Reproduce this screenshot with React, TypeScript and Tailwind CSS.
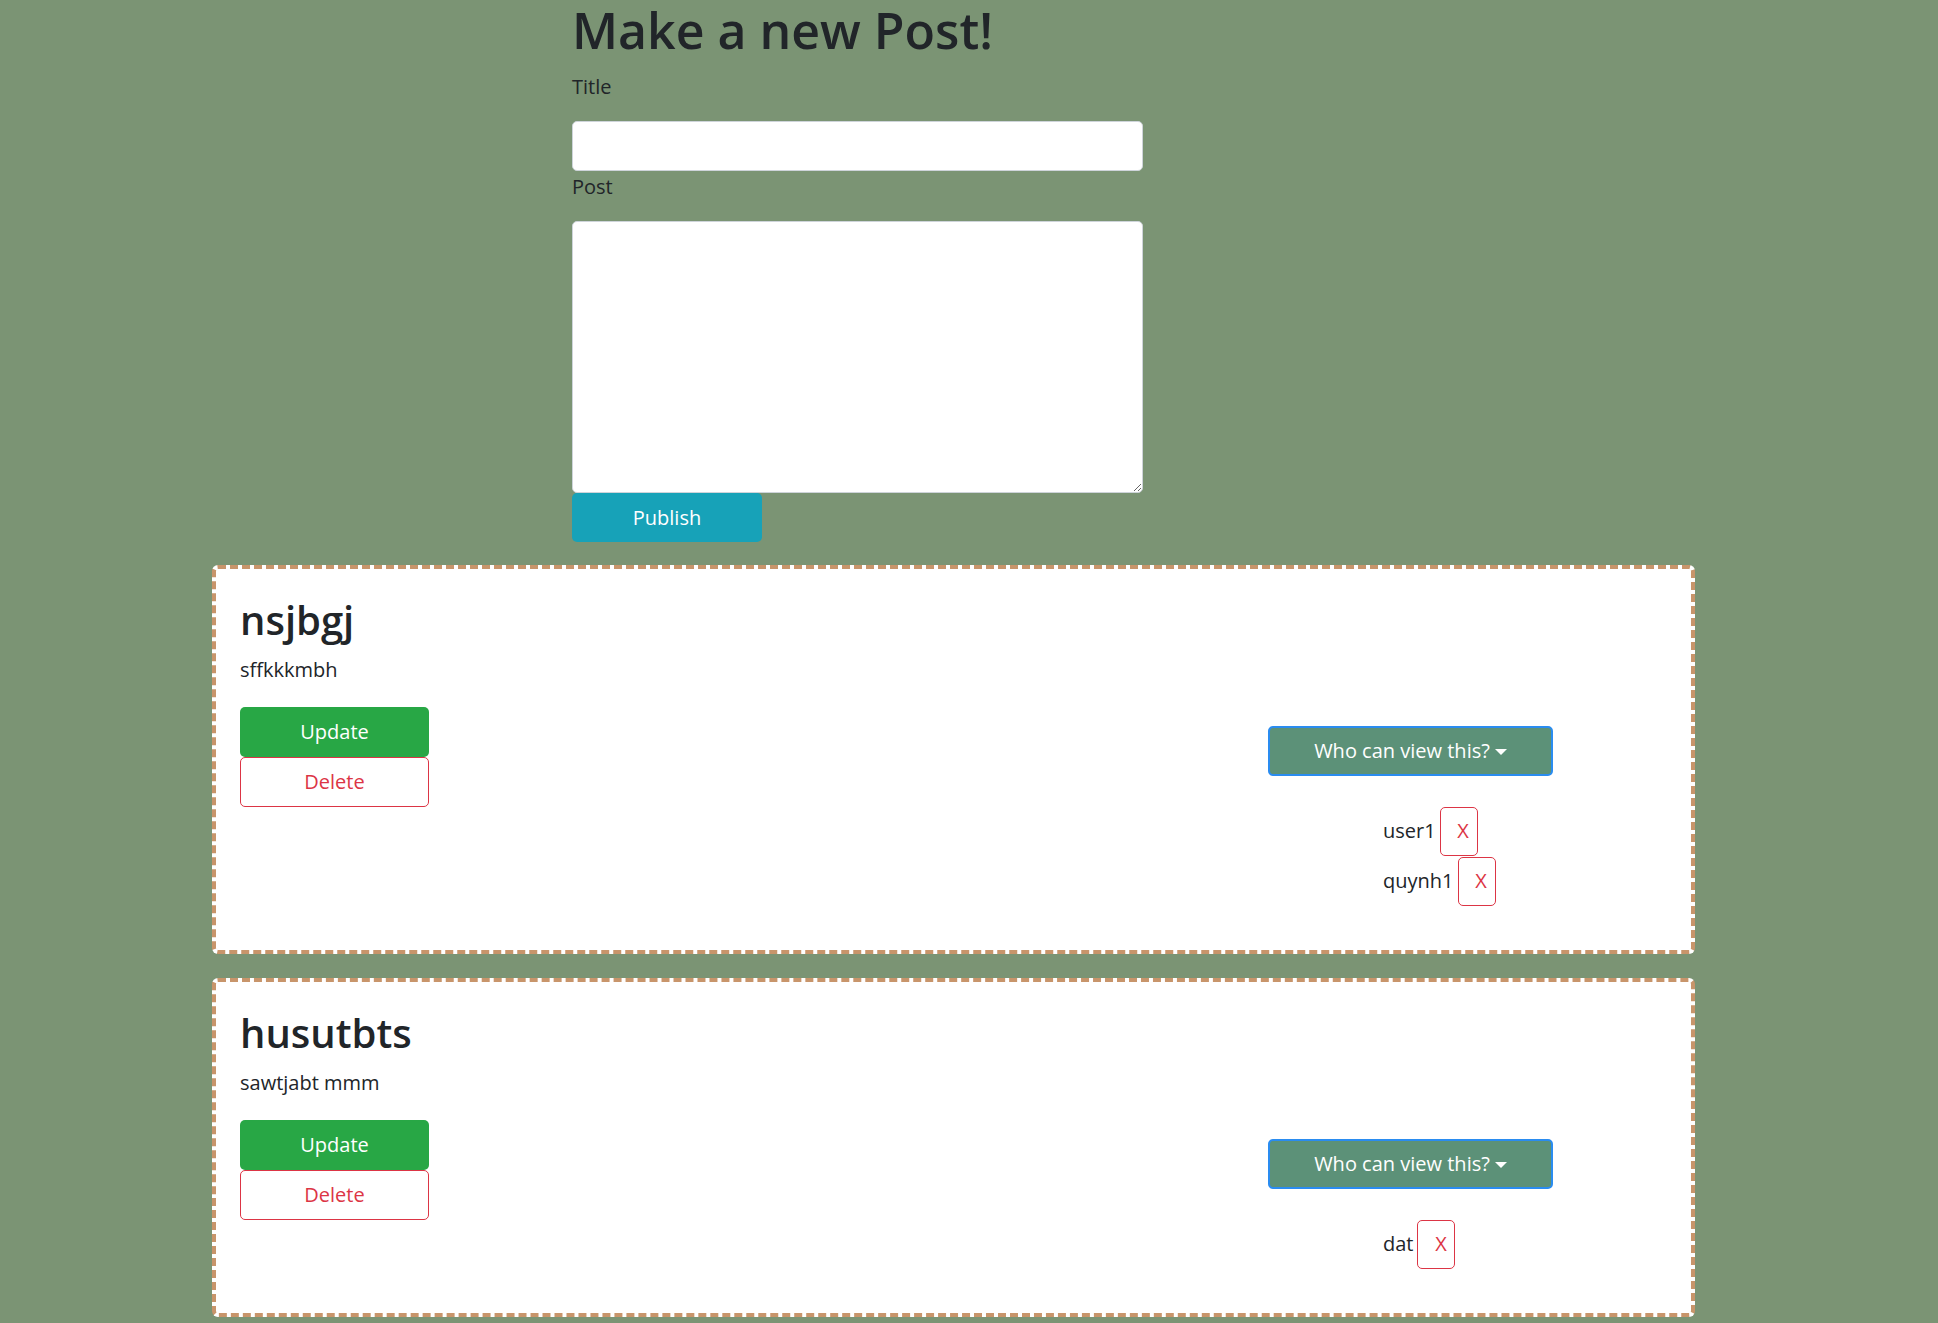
import React from 'react'

type Post = {
  title: string
  body: string
  viewers: string[]
}

const posts: Post[] = [
  { title: 'nsjbgj', body: 'sffkkkmbh', viewers: ['user1', 'quynh1'] },
  { title: 'husutbts', body: 'sawtjabt mmm', viewers: ['dat'] },
]

function ViewerRow({ name }: { name: string }) {
  return (
    <div className="flex h-[50px] items-center">
      <span className="text-[20px] text-[#212529]">{name}</span>
      <button className="ml-[4px] flex h-[49px] w-[38px] items-center justify-center rounded-[5px] border border-[#dc3545] pl-[9px] text-[20px] text-[#dc3545]">
        X
      </button>
    </div>
  )
}

function PostCard({ post }: { post: Post }) {
  return (
    <div className="flex items-start rounded-[6px] border-[4px] border-dashed border-[#c8956b] bg-white pb-[44px] pl-[24px] pt-[27px]">
      <div className="flex w-[189px] shrink-0 flex-col">
        <h2 className="whitespace-nowrap text-[40px] font-semibold leading-[48px] text-[#212529]">{post.title}</h2>
        <p className="mt-[11px] whitespace-nowrap text-[20px] leading-[30px] text-[#212529]">{post.body}</p>
        <button className="mt-[22px] h-[50px] w-[189px] rounded-[5px] bg-[#28a745] text-[20px] text-white">
          Update
        </button>
        <button className="h-[50px] w-[189px] rounded-[5px] border border-[#dc3545] bg-white text-[20px] text-[#dc3545]">
          Delete
        </button>
      </div>
      <div className="ml-[839px] mt-[130px] flex w-[285px] flex-col">
        <button className="flex h-[50px] w-[285px] items-center justify-center rounded-[5px] border-2 border-[#2a8cf0] bg-[#5c9178] text-[20px] text-white">
          Who can view this?
          <span className="ml-[5px] mt-[1px] h-0 w-0 border-x-[6px] border-t-[6px] border-x-transparent border-t-white" />
        </button>
        <div className="mt-[30px] flex flex-col pl-[115px]">
          {post.viewers.map((v) => (
            <ViewerRow key={v} name={v} />
          ))}
        </div>
      </div>
    </div>
  )
}

export default function App() {
  return (
    <div className="min-h-[1323px] bg-[#7b9474] pb-[8px] font-['Open_Sans','Noto_Sans',sans-serif] text-[#212529]">
      <div className="ml-[572px] flex w-[571px] flex-col">
        <h1 className="h-[72px] whitespace-nowrap text-[50px] font-semibold leading-[60px]">Make a new Post!</h1>
        <label className="h-[30px] text-[20px] leading-[30px]">Title</label>
        <input className="mt-[19px] h-[50px] w-[571px] rounded-[5px] border border-[#ced4da] bg-white px-3 text-[20px] outline-none" />
        <label className="mt-[1px] h-[30px] text-[20px] leading-[30px]">Post</label>
        <textarea className="mt-[19px] h-[272px] w-[571px] rounded-[5px] border border-[#ced4da] bg-white px-3 text-[20px] outline-none" />
        <button className="h-[49px] w-[190px] rounded-[5px] bg-[#17a2b8] text-[20px] text-white">Publish</button>
      </div>
      <div className="ml-[212px] mt-[23px] flex w-[1483px] flex-col gap-[24px]">
        {posts.map((p) => (
          <PostCard key={p.title} post={p} />
        ))}
      </div>
    </div>
  )
}
